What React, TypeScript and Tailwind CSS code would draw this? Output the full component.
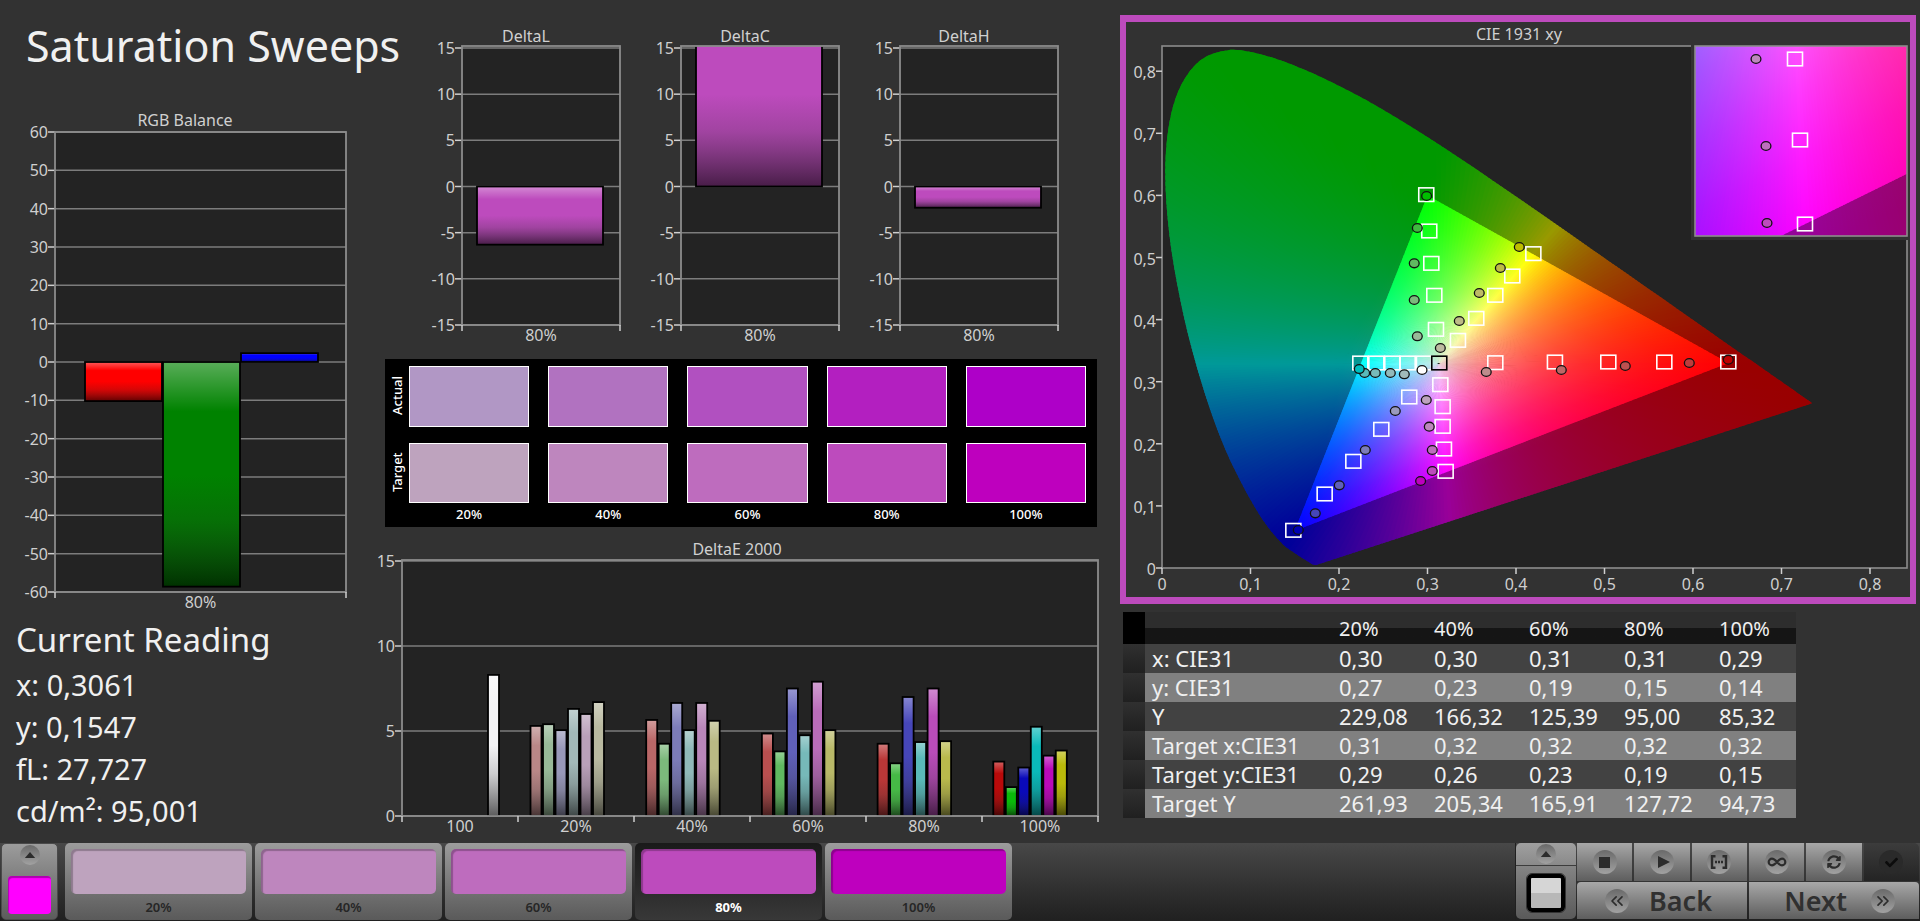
import React, { useState } from 'react';
import { ChevronsLeft, ChevronsRight, Infinity as InfinityIcon } from 'lucide-react';
import { FaCheck, FaSyncAlt } from 'react-icons/fa';

type Point = [number, number];

interface Bar {
  x: number;
  width: number;
  value: number;
  color: string;
}

interface ChartProps {
  id: string;
  title: string;
  titleX: number;
  titleY: number;
  width: number;
  height: number;
  plot: { left: number; right: number; top: number; bottom: number };
  // pixel rows of the first and last tick
  scale: { top: number; bottom: number };
  min: number;
  max: number;
  step: number;
  categories: string[];
  bars: Bar[];
}

function BarChart({ id, title, titleX, titleY, width, height, plot, scale, min, max, step, categories, bars }: ChartProps) {
  const toY = (v: number) => scale.bottom - ((v - min) / (max - min)) * (scale.bottom - scale.top);
  const ticks: number[] = [];
  for (let v = min; v <= max; v += step) ticks.push(v);
  const slot = (plot.right - plot.left) / categories.length;

  return (
    <svg viewBox={`0 0 ${width} ${height}`} className="block w-full overflow-visible" role="img" aria-label={title}>
      <defs>
        <linearGradient id={`${id}-gloss`} x1="0" y1="0" x2="0" y2="1">
          <stop offset="0" stopColor="#fff" stopOpacity="0.35" />
          <stop offset="0.22" stopColor="#fff" stopOpacity="0" />
          <stop offset="0.5" stopColor="#222" stopOpacity="0" />
          <stop offset="0.7" stopColor="#222" stopOpacity="0.18" />
          <stop offset="1" stopColor="#000" stopOpacity="0.62" />
        </linearGradient>
        <clipPath id={`${id}-clip`}>
          <rect x={plot.left} y={plot.top} width={plot.right - plot.left} height={plot.bottom - plot.top} />
        </clipPath>
      </defs>
      <text x={titleX} y={titleY} textAnchor="middle" className="fill-[#d0d0d0] text-[16px]">{title}</text>
      <rect x={plot.left} y={plot.top} width={plot.right - plot.left} height={plot.bottom - plot.top} className="fill-[#232323]" />
      {ticks.map(v => (
        <g key={v}>
          <line x1={plot.left} x2={plot.right} y1={toY(v)} y2={toY(v)} stroke="#7c7c7c" strokeWidth="1.5" />
          <line x1={plot.left - 7} x2={plot.left} y1={toY(v)} y2={toY(v)} stroke="#cfcfcf" strokeWidth="1.5" />
          <text x={plot.left - 7} y={toY(v) + 6} textAnchor="end" className="fill-[#cfcfcf] text-[16px]">{v}</text>
        </g>
      ))}
      <g clipPath={`url(#${id}-clip)`}>
        {bars.map((b, i) => {
          const y = Math.min(toY(b.value), toY(Math.max(0, min)));
          const h = Math.abs(toY(b.value) - toY(Math.max(0, min)));
          return (
            <g key={i}>
              <rect x={b.x} y={y} width={b.width} height={h} fill={b.color} />
              <rect x={b.x} y={y} width={b.width} height={h} fill={`url(#${id}-gloss)`} stroke="#000" strokeWidth="1.8" />
            </g>
          );
        })}
      </g>
      <rect x={plot.left} y={plot.top} width={plot.right - plot.left} height={plot.bottom - plot.top} fill="none" stroke="#8c8c8c" strokeWidth="1.8" />
      {categories.map((c, i) => (
        <g key={c}>
          <line x1={plot.left + i * slot} x2={plot.left + i * slot} y1={plot.bottom} y2={plot.bottom + 6} stroke="#cfcfcf" strokeWidth="1.5" />
          <text x={plot.left + (i + 0.5) * slot} y={plot.bottom + 16} textAnchor="middle" className="fill-[#cfcfcf] text-[16px]">{c}</text>
        </g>
      ))}
      <line x1={plot.right} x2={plot.right} y1={plot.bottom} y2={plot.bottom + 6} stroke="#cfcfcf" strokeWidth="1.5" />
    </svg>
  );
}

/* ---------- CIE 1931 ---------- */

const WHITE: Point = [0.3127, 0.329];
const GAMUT: Point[] = [[0.64, 0.33], [0.3, 0.6], [0.15, 0.06]];

const LOCUS: Point[] = [
  [0.1741, 0.005], [0.1714, 0.0051], [0.1689, 0.0069], [0.1644, 0.0109], [0.1566, 0.0177], [0.144, 0.0297],
  [0.1355, 0.0399], [0.1241, 0.0578], [0.1096, 0.0868], [0.0913, 0.1327], [0.0687, 0.2007], [0.0454, 0.295],
  [0.0235, 0.4127], [0.0082, 0.5384], [0.0039, 0.6548], [0.0139, 0.7502], [0.0389, 0.812], [0.0743, 0.8338],
  [0.1142, 0.8262], [0.1547, 0.8059], [0.1929, 0.7816], [0.2296, 0.7543], [0.2658, 0.7243], [0.3016, 0.6923],
  [0.3373, 0.6589], [0.3731, 0.6245], [0.4087, 0.5896], [0.4441, 0.5547], [0.4788, 0.5202], [0.5125, 0.4866],
  [0.5752, 0.4242], [0.627, 0.3725], [0.6658, 0.334], [0.6915, 0.3083], [0.719, 0.2809], [0.7347, 0.2653],
];

const TARGETS: Point[] = [
  [0.2986, 0.6012], [0.302, 0.5427], [0.3043, 0.4906], [0.3077, 0.4391], [0.3096, 0.3843],
  [0.4196, 0.5062], [0.3958, 0.4702], [0.3766, 0.4391], [0.3551, 0.402], [0.3344, 0.3666],
  [0.6399, 0.3317], [0.5676, 0.3317], [0.5043, 0.3317], [0.444, 0.3317], [0.3766, 0.3306],
  [0.2241, 0.3301], [0.2422, 0.3301], [0.2602, 0.3301], [0.2776, 0.3301], [0.296, 0.3301],
  [0.1484, 0.0607], [0.1838, 0.1192], [0.2162, 0.1718], [0.2478, 0.2233], [0.2794, 0.2754],
  [0.3145, 0.2952], [0.3171, 0.2598], [0.3171, 0.2281], [0.3186, 0.1916], [0.3205, 0.1557],
];

const READINGS: [number, number, string][] = [
  [0.299, 0.599, '#00be00'], [0.2885, 0.5475, '#3fb93f'], [0.285, 0.4906, '#60b960'], [0.285, 0.4316, '#7cb97c'], [0.2885, 0.3731, '#98b998'],
  [0.4037, 0.5169, '#bebe00'], [0.3823, 0.4831, '#bdbb46'], [0.3585, 0.4428, '#bdbb66'], [0.3359, 0.3977, '#bdbb86'], [0.3145, 0.3543, '#bdbba0'],
  [0.6399, 0.3355, '#be0000'], [0.5958, 0.3301, '#be3c3c'], [0.5235, 0.3253, '#be5050'], [0.4512, 0.3188, '#be6666'], [0.3664, 0.3156, '#be8c8c'],
  [0.2738, 0.3119, '#a0baba'], [0.258, 0.314, '#92baba'], [0.241, 0.314, '#78baba'], [0.229, 0.314, '#5ababa'], [0.2229, 0.3204, '#00bebe'],
  [0.2938, 0.3188, '#ffffff'],
  [0.154, 0.0612, '#0000b4'], [0.1732, 0.088, '#4646b9'], [0.2003, 0.1331, '#6060b9'], [0.2297, 0.19, '#7c7cb9'], [0.2636, 0.2528, '#9a9abe'],
  [0.2922, 0.1401, '#be00be'], [0.3054, 0.1562, '#bd4bbd'], [0.3054, 0.19, '#bd6ebd'], [0.302, 0.2276, '#bd88bd'], [0.2986, 0.2705, '#bda3bd'],
];

function chromaColor(x: number, y: number, dim: number) {
  const z = 1 - x - y;
  const rgb = [
    3.2406 * x - 1.5372 * y - 0.4986 * z,
    -0.9689 * x + 1.8758 * y + 0.0415 * z,
    0.0557 * x - 0.204 * y + 1.057 * z,
  ].map(c => Math.max(0, c));
  const top = Math.max(...rgb, 0.0001);
  return `rgb(${rgb.map(c => Math.round((c / top) * 255 * dim)).join(',')})`;
}

// distance from the white point to the edge of the gamut triangle
function edgeDistance(dx: number, dy: number) {
  let best = 2;
  GAMUT.forEach((a, i) => {
    const b = GAMUT[(i + 1) % 3];
    const ex = b[0] - a[0];
    const ey = b[1] - a[1];
    const det = ex * dy - ey * dx;
    if (Math.abs(det) < 1e-9) return;
    const ax = a[0] - WHITE[0];
    const ay = a[1] - WHITE[1];
    const t = (ex * ay - ey * ax) / det;
    if (t > 0 && t < best) best = t;
  });
  return best;
}

interface FieldProps {
  id: string;
  toX: (v: number) => number;
  toY: (v: number) => number;
  from?: number;
  to?: number;
  step?: number;
  outside?: boolean;
}

// A fan of thin wedges round the white point, each with its own gradient
function ChromaField({ id, toX, toY, from = 0, to = 360, step = 1, outside = false }: FieldProps) {
  const wedges = [];
  for (let a = from; a < to; a += step) {
    const rad = (a * Math.PI) / 180;
    const dx = Math.cos(rad);
    const dy = Math.sin(rad);
    const edge = edgeDistance(dx, dy);
    const start = outside ? edge * 0.9 : 0;
    const end = outside ? edge + 0.45 : edge * 1.03;
    const reach = (outside ? edge + 0.7 : edge * 1.15) + 0.01;
    const corner = (deg: number) => {
      const r = (deg * Math.PI) / 180;
      return `${toX(WHITE[0] + Math.cos(r) * reach).toFixed(1)},${toY(WHITE[1] + Math.sin(r) * reach).toFixed(1)}`;
    };
    const stops = [0, 0.06, 0.14, 0.24, 0.36, 0.5, 0.66, 0.82, 1];
    wedges.push(
      <g key={a}>
        <linearGradient
          id={`${id}-${a}`}
          gradientUnits="userSpaceOnUse"
          x1={toX(WHITE[0] + dx * start)}
          y1={toY(WHITE[1] + dy * start)}
          x2={toX(WHITE[0] + dx * end)}
          y2={toY(WHITE[1] + dy * end)}
        >
          {stops.map(s => {
            const d = start + (end - start) * s;
            return <stop key={s} offset={s} stopColor={chromaColor(WHITE[0] + dx * d, WHITE[1] + dy * d, outside ? 0.6 : 1)} />;
          })}
        </linearGradient>
        <polygon
          points={`${toX(WHITE[0])},${toY(WHITE[1])} ${corner(a - step / 2)} ${corner(a + step * 1.2)}`}
          fill={`url(#${id}-${a})`}
        />
      </g>
    );
  }
  return <>{wedges}</>;
}

function smoothPath(points: Point[]) {
  let d = `M${points[0].join(' ')}`;
  for (let i = 0; i < points.length - 1; i++) {
    const p0 = points[Math.max(0, i - 1)];
    const p1 = points[i];
    const p2 = points[i + 1];
    const p3 = points[Math.min(points.length - 1, i + 2)];
    d += ` C${p1[0] + (p2[0] - p0[0]) / 6} ${p1[1] + (p2[1] - p0[1]) / 6} ${p2[0] - (p3[0] - p1[0]) / 6} ${p2[1] - (p3[1] - p1[1]) / 6} ${p2[0]} ${p2[1]}`;
  }
  return `${d} Z`;
}

function Target({ x, y, stroke = '#fff' }: { x: number; y: number; stroke?: string }) {
  return <rect x={x - 7.5} y={y - 6.8} width="15" height="13.6" fill="none" stroke={stroke} strokeWidth="1.6" />;
}

function Reading({ x, y, fill }: { x: number; y: number; fill: string }) {
  return <ellipse cx={x} cy={y} rx="4.9" ry="4.4" fill={fill} stroke="#111" strokeWidth="1.3" />;
}

function CieChart() {
  const toX = (v: number) => 36 + v * 885;
  const toY = (v: number) => 546 - v * 621;
  const zoomX = (v: number) => 675.5 + (v - 0.3193) * 2643;
  const zoomY = (v: number) => 119 - (v - 0.1892) * 2360;
  const px = (pts: Point[], fx = toX, fy = toY) => pts.map(([x, y]) => [fx(x), fy(y)] as Point);
  const label = (n: number) => (n === 0 ? '0' : `0,${n}`);

  return (
    <svg viewBox="0 0 784 575" className="block w-full" role="img" aria-label="CIE 1931 xy">
      <defs>
        <clipPath id="locus"><path d={smoothPath(px(LOCUS))} /></clipPath>
        <clipPath id="gamut"><polygon points={px(GAMUT).join(' ')} /></clipPath>
        <clipPath id="zoomBox"><rect x="569" y="24" width="212" height="190" /></clipPath>
        <clipPath id="zoomGamut"><polygon points={px(GAMUT, zoomX, zoomY).join(' ')} /></clipPath>
      </defs>
      <text x="393" y="18" textAnchor="middle" className="fill-[#d0d0d0] text-[16px]">CIE 1931 xy</text>
      <rect x="36" y="24" width="745" height="522" className="fill-[#232323]" stroke="#8c8c8c" strokeWidth="1.6" />
      {[0, 1, 2, 3, 4, 5, 6, 7, 8].map(n => (
        <g key={n}>
          <line x1="30" x2="36" y1={toY(n / 10)} y2={toY(n / 10)} stroke="#cfcfcf" strokeWidth="1.5" />
          <text x="30" y={toY(n / 10) + 7} textAnchor="end" className="fill-[#cfcfcf] text-[16px]">{label(n)}</text>
          <line x1={toX(n / 10)} x2={toX(n / 10)} y1="546" y2="552" stroke="#cfcfcf" strokeWidth="1.5" />
          <text x={toX(n / 10)} y="568" textAnchor="middle" className="fill-[#cfcfcf] text-[16px]">{label(n)}</text>
        </g>
      ))}

      <g clipPath="url(#locus)"><ChromaField id="out" toX={toX} toY={toY} outside /></g>
      <g clipPath="url(#gamut)"><ChromaField id="in" toX={toX} toY={toY} /></g>
      {TARGETS.map(([x, y]) => <Target key={`${x}-${y}`} x={toX(x)} y={toY(y)} />)}
      <Target x={toX(0.3133)} y={toY(0.3301)} stroke="#000" />
      {READINGS.map(([x, y, c]) => <Reading key={`${x}-${y}`} x={toX(x)} y={toY(y)} fill={c} />)}

      {/* magnified area round the selected target */}
      <rect x="565" y="22" width="219" height="196" className="fill-[#323232]" />
      <g clipPath="url(#zoomBox)">
        <ChromaField id="zout" toX={zoomX} toY={zoomY} from={230} to={320} step={0.5} outside />
        <g clipPath="url(#zoomGamut)"><ChromaField id="zin" toX={zoomX} toY={zoomY} from={230} to={320} step={0.5} /></g>
      </g>
      <rect x="569" y="24" width="212" height="190" fill="none" stroke="#8c8c8c" strokeWidth="1.6" />
      <Target x={669} y={37} />
      <Target x={674} y={118} />
      <Target x={679} y={202} />
      <Reading x={630} y={37} fill="#bd88bd" />
      <Reading x={640} y={124} fill="#bd6ebd" />
      <Reading x={641} y={201} fill="#bd4bbd" />
    </svg>
  );
}

/* ---------- data ---------- */

const LEVELS = ['20%', '40%', '60%', '80%', '100%'];

const SWATCHES = [
  { actual: 'bg-[#b197c5]', target: 'bg-[#bea3be]' },
  { actual: 'bg-[#b172c0]', target: 'bg-[#be86be]' },
  { actual: 'bg-[#b150c0]', target: 'bg-[#be6cbe]' },
  { actual: 'bg-[#b31fc0]', target: 'bg-[#bd4bbd]' },
  { actual: 'bg-[#ae00c8]', target: 'bg-[#be00be]' },
];

const DELTAS = [
  { title: 'DeltaL', value: -6.3 },
  { title: 'DeltaC', value: 20 },
  { title: 'DeltaH', value: -2.3 },
];

const DELTA_E = [
  { values: [5.3, 5.4, 5.05, 6.3, 6, 6.7], colors: ['#b98787', '#98b998', '#9898b9', '#a2b9b9', '#b9a0b9', '#b9b9a0'] },
  { values: [5.65, 4.25, 6.65, 5.05, 6.65, 5.6], colors: ['#b96767', '#7cb97c', '#7c7cb9', '#90b9b9', '#b986b9', '#b9b984'] },
  { values: [4.85, 3.8, 7.5, 4.75, 7.9, 5.05], colors: ['#b94f4f', '#60b960', '#6060b9', '#76b9b9', '#b96cb9', '#b9b968'] },
  { values: [4.25, 3.1, 7, 4.35, 7.5, 4.4], colors: ['#b93737', '#46b946', '#4646b9', '#5ab9b9', '#b94cb9', '#b9b94c'] },
  { values: [3.2, 1.7, 2.85, 5.25, 3.55, 3.85], colors: ['#b90a0a', '#0ab90a', '#0a0ab9', '#0ab9b9', '#b90ab9', '#b9b90a'] },
];

const DELTA_E_BARS: Bar[] = [
  { x: 108, width: 11, value: 8.3, color: '#f2f2f4' },
  ...DELTA_E.flatMap((g, gi) =>
    g.values.map((value, i) => ({ x: 150.5 + gi * 115.7 + i * 12.5, width: 11, value, color: g.colors[i] }))
  ),
];

const ROWS = [
  { name: 'x: CIE31', cells: ['0,30', '0,30', '0,31', '0,31', '0,29'] },
  { name: 'y: CIE31', cells: ['0,27', '0,23', '0,19', '0,15', '0,14'] },
  { name: 'Y', cells: ['229,08', '166,32', '125,39', '95,00', '85,32'] },
  { name: 'Target x:CIE31', cells: ['0,31', '0,32', '0,32', '0,32', '0,32'] },
  { name: 'Target y:CIE31', cells: ['0,29', '0,26', '0,23', '0,19', '0,15'] },
  { name: 'Target Y', cells: ['261,93', '205,34', '165,91', '127,72', '94,73'] },
];

/* ---------- toolbar parts ---------- */

function Knob({ children, small, dark }: { children: React.ReactNode; small?: boolean; dark?: boolean }) {
  return (
    <span
      className={`flex shrink-0 items-center justify-center rounded-full ${small ? 'size-5' : 'size-6'} ${
        dark ? 'bg-[#2a2a2a] text-[#0c0c0c]' : 'bg-linear-to-b from-[#6a6a6a] to-[#a2a2a2] text-[#2c2c2c]'
      }`}
    >
      {children}
    </span>
  );
}

function UpArrow() {
  return (
    <Knob small>
      <svg viewBox="0 0 12 7" className="h-[6px] w-3"><path d="M6 0 12 7H0z" fill="currentColor" /></svg>
    </Knob>
  );
}

const TOOLS = [
  { name: 'Stop', icon: <svg viewBox="0 0 12 12" className="size-[11px]"><path d="M0 0h12v12H0z" fill="currentColor" /></svg> },
  { name: 'Play', icon: <svg viewBox="0 0 12 12" className="ml-1 size-3"><path d="M0 0 12 6 0 12z" fill="currentColor" /></svg> },
  {
    name: 'Read series',
    icon: (
      <svg viewBox="0 0 18 14" className="h-[14px] w-[18px]" fill="none" stroke="currentColor" strokeWidth="2.4">
        <path d="M5.500 1.200H2v11.600h3.500M12.500 1.200H16v11.600h-3.500" />
        <path d="M5 7h2M8 7h2M11 7h2" />
      </svg>
    ),
  },
  { name: 'Continuous', icon: <InfinityIcon className="size-5" strokeWidth={2.6} /> },
  { name: 'Refresh', icon: <FaSyncAlt className="size-[14px]" /> },
];

export default function App() {
  const [selected, setSelected] = useState(3);

  return (
    <div className="flex min-h-screen flex-col bg-[#323232] font-['Noto_Sans','Open_Sans',sans-serif] text-[#f0f0f0]">
      <main className="grid flex-1 grid-cols-[380fr_732fr_808fr] items-start">
        {/* RGB balance and current reading */}
        <section className="min-w-0">
          <h1 className="h-[108px] pt-4 pl-[26px] text-[43px] leading-[60px] whitespace-nowrap">Saturation Sweeps</h1>
          <BarChart
            id="rgb"
            title="RGB Balance"
            titleX={185}
            titleY={18}
            width={380}
            height={508}
            plot={{ left: 55, right: 346, top: 24, bottom: 484 }}
            scale={{ top: 24, bottom: 484 }}
            min={-60}
            max={60}
            step={10}
            categories={['80%']}
            bars={[
              { x: 85, width: 77, value: -10.2, color: '#ff0000' },
              { x: 163, width: 77, value: -58.6, color: '#008200' },
              { x: 241, width: 77, value: 2.3, color: '#0000ff' },
            ]}
          />
          <div className="pl-4">
            <h2 className="text-[33px] leading-[48px]">Current Reading</h2>
            <div className="text-[29px] leading-[42px]">
              <p>x: 0,3061</p>
              <p>y: 0,1547</p>
              <p>fL: 27,727</p>
              <p>cd/m²: 95,001</p>
            </div>
          </div>
        </section>

        {/* Deltas */}
        <section className="min-w-0">
          <div className="grid grid-cols-3 pr-[35px] pl-10">
            {DELTAS.map(d => (
              <BarChart
                key={d.title}
                id={d.title}
                title={d.title}
                titleX={106}
                titleY={42}
                width={219}
                height={359}
                plot={{ left: 42, right: 200, top: 46, bottom: 325 }}
                scale={{ top: 48, bottom: 325 }}
                min={-15}
                max={15}
                step={5}
                categories={['80%']}
                bars={[{ x: 57, width: 126, value: d.value, color: '#bd4bbd' }]}
              />
            ))}
          </div>

          <div className="mr-[15px] ml-[5px] flex h-[168px] bg-black pt-[7px] text-white">
            <div className="flex w-6 flex-col items-center gap-4 text-[13px] leading-[20px] font-medium">
              <span className="flex h-[60px] rotate-180 items-center justify-center [writing-mode:vertical-rl]">Actual</span>
              <span className="flex h-[60px] rotate-180 items-center justify-center [writing-mode:vertical-rl]">Target</span>
            </div>
            <div className="grid flex-1 grid-cols-5 gap-x-[19px] pr-[11px]">
              {SWATCHES.map((s, i) => (
                <div key={LEVELS[i]} className="text-center text-[13px] leading-[22px] font-medium">
                  <div className={`h-[61px] border border-white ${s.actual}`} />
                  <div className={`mt-4 h-[60px] border border-white ${s.target}`} />
                  {LEVELS[i]}
                </div>
              ))}
            </div>
          </div>

          <BarChart
            id="deltaE"
            title="DeltaE 2000"
            titleX={357}
            titleY={28}
            width={732}
            height={314}
            plot={{ left: 22, right: 718, top: 33, bottom: 289 }}
            scale={{ top: 34, bottom: 289 }}
            min={0}
            max={15}
            step={5}
            categories={['100', ...LEVELS]}
            bars={DELTA_E_BARS}
          />
        </section>

        {/* CIE diagram and readings */}
        <section className="min-w-0">
          <div className="mt-[15px] mr-1 ml-2 border-x-[6px] border-y-[7px] border-[#bd4bbd]">
            <CieChart />
          </div>
          <table className="mt-2 ml-[11px] w-5/6 table-fixed text-left text-[22px] leading-[29px]">
            <colgroup>
              <col className="w-[22px]" />
              <col className="w-[186px]" />
              <col className="w-[95px]" />
              <col className="w-[95px]" />
              <col className="w-[95px]" />
              <col className="w-[95px]" />
            </colgroup>
            <thead>
              <tr className="h-8 bg-linear-to-b from-[#2d2d2d] from-50% to-[#151515] to-50%">
                <th className="bg-black" />
                <th />
                {LEVELS.map(l => <th key={l} className="pl-2 text-[20px] font-normal">{l}</th>)}
              </tr>
            </thead>
            <tbody>
              {ROWS.map((r, i) => (
                <tr key={r.name} className={i % 2 ? 'bg-[#808080]' : 'bg-[#424242]'}>
                  <td className="bg-linear-to-b from-[#303030] to-[#202020]" />
                  <th scope="row" className="pl-[7px] font-normal whitespace-nowrap">{r.name}</th>
                  {r.cells.map((c, ci) => <td key={ci} className="pl-2">{c}</td>)}
                </tr>
              ))}
            </tbody>
          </table>
        </section>
      </main>

      <footer className="flex h-[78px] justify-between bg-linear-to-b from-[#484848] to-[#202020]">
        <div className="flex gap-[3px] pl-px">
          <button
            aria-label="Select color"
            className="mr-1 flex h-[77px] w-[57px] flex-col items-center justify-between rounded-[5px] border border-[#4a4a4a] bg-linear-to-b from-[#9c9c9c] to-[#5c5c5c] pt-px pb-[5px]"
          >
            <UpArrow />
            <span className="h-[38px] w-[43px] rounded-[4px] bg-[#ff00ff] shadow-[inset_1px_2px_1px_#b000b0]" />
          </button>
          {LEVELS.map((l, i) => (
            <button
              key={l}
              onClick={() => setSelected(i)}
              className={`flex h-[77px] w-[187px] flex-col rounded-[5px] px-[6px] pt-[6px] text-center text-[13px] leading-[26px] ${
                selected === i
                  ? 'bg-linear-to-b from-[#1a1a1a] to-[#383838] font-bold text-white'
                  : 'bg-linear-to-b from-[#9c9c9c] to-[#5a5a5a] font-semibold text-[#262626]'
              }`}
            >
              <span className={`h-[45px] w-full rounded-[5px] shadow-[inset_2px_2px_1px_rgba(0,0,0,0.25)] ${SWATCHES[i].target}`} />
              <span className="w-full">{l}</span>
            </button>
          ))}
        </div>

        <div className="flex gap-px border-l border-[#202020] pr-px">
          <div className="flex w-[60px] flex-col gap-px">
            <button aria-label="Pattern menu" className="flex h-[22px] items-center justify-center rounded-t-[5px] bg-linear-to-b from-[#a0a0a0] to-[#8a8a8a]">
              <UpArrow />
            </button>
            <button aria-label="Pattern window" className="flex h-[53px] items-center justify-center rounded-b-[5px] bg-linear-to-b from-[#848484] to-[#5a5a5a]">
              <span className="size-[38px] rounded-[5px] border-4 border-black bg-linear-to-b from-[#d6d6d6] from-50% to-[#b8b8b8] to-50% outline outline-[#333]" />
            </button>
          </div>
          <div className="flex w-[342px] flex-col gap-px">
            <div className="grid h-[38px] grid-cols-6 gap-[2px]">
              {TOOLS.map(t => (
                <button key={t.name} aria-label={t.name} className="flex items-center justify-center bg-linear-to-b from-[#a8a8a8] to-[#5e5e5e]">
                  <Knob>{t.icon}</Knob>
                </button>
              ))}
              <button aria-label="Done" className="flex items-center justify-center rounded-tr-[5px] bg-linear-to-b from-[#3c3c3c] to-[#242424]">
                <Knob dark><FaCheck className="size-[13px]" /></Knob>
              </button>
            </div>
            <div className="grid h-[37px] grid-cols-2 gap-[2px] text-[27px] leading-[36px] font-semibold text-[#303030]">
              <button className="flex items-center gap-5 rounded-tl-[4px] bg-linear-to-b from-[#a8a8a8] to-[#5e5e5e] pl-7">
                <Knob><ChevronsLeft className="size-5" strokeWidth={2} /></Knob>
                Back
              </button>
              <button className="flex items-center justify-end gap-6 rounded-tr-[4px] bg-linear-to-b from-[#a8a8a8] to-[#5e5e5e] pr-6">
                Next
                <Knob><ChevronsRight className="size-5" strokeWidth={2} /></Knob>
              </button>
            </div>
          </div>
        </div>
      </footer>
    </div>
  );
}
